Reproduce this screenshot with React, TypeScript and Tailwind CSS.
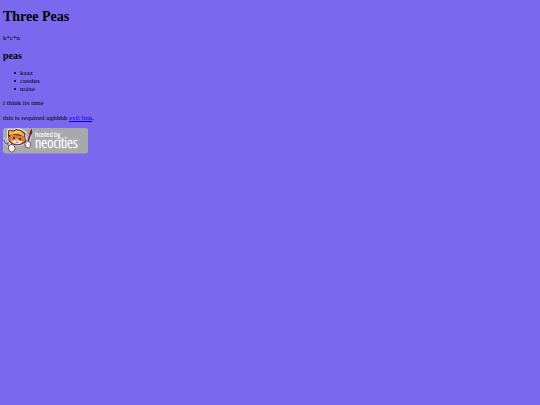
const peas = ["kaaz", "cassius", "noise"];

const NeocitiesBadge = () => {
  return (
    <svg viewBox="0 0 85 26" className="h-[26px] w-[85px]" role="img" aria-label="hosted by neocities">
      <rect x="0" y="0" width="85" height="25.4" rx="2.6" fill="#a9a9ab" />
      {/* wrench */}
      <g fill="none" strokeLinecap="round" strokeLinejoin="round">
        <path d="M.9 11.8l1.3 3.4 2.4.3 1.2-2-.9-3M4 16l4 4" stroke="#e9e7f2" strokeWidth="2.8" />
        <path d="M.9 11.8l1.3 3.4 2.4.3 1.2-2-.9-3M4 16l4 4" stroke="#66648c" strokeWidth="1.5" />
      </g>
      {/* brush */}
      <path d="M29 0l1 2.5-.8 5.6-3.5 8.6-2.4-.7 3-8.3.3-4.7z" fill="#d8d2da" />
      <path d="M28.7.6c1.3 2.4.9 5-.6 7.2l-1.9-.6c-.1-2.6.8-4.9 2.5-6.6z" fill="#752036" />
      <path d="M27 7.4l-2.4 7.4" stroke="#54293b" strokeWidth="1.5" />
      {/* cat */}
      <path d="M4 7.2l.2-5.6L6.7.3l3.1.9L13.5 0l4.7.8 3.2 2 2.2 1.5-.3 4.2 1.5 3.8-2.6 3.2-3.5 1.9-5.1.9-5.2-1.5-3.6-3.3-.6-2.9z" fill="#ece7f2" />
      <path d="M4.9 6.9l.3-4.5 1.7-1 3 1.2 3.6-1.5 4.3.8 2.8 1.9 2 1.4-.5 3.7 1.6 3.5-2.1 2.5-3.4 1.9-4.6.7-4.6-1.3-3.4-3-.2-3z" fill="#55342c" />
      <path d="M6.2 9.2l2.7-2.6 12.1 2 1.7 3.5-1.9 2-3.2 1.7-4 .6-4.2-1.2-3-2.8z" fill="#e57c36" />
      <path d="M5.9 6.6l.2-3.4 1.1-.6 2.7 1.1 3.7-1.5 3.8.8 2.5 1.8 1.5 1.4-.4 2.3-5.2-2.3-4.9-.3-3.6 1.5z" fill="#efb83c" />
      <path d="M10.4 4.6l3.3-1.3 3.5 1" fill="none" stroke="#ffe07a" strokeWidth="1" />
      <path d="M8.4 13l3.2-.4 2.3-1.6 2.2 1.8 3.6.7-2.1 1.9-3.5.7-3.8-1z" fill="#fff5ea" />
      <ellipse cx="10.9" cy="10" rx=".9" ry="1.3" fill="#302337" />
      <ellipse cx="17.2" cy="11" rx=".9" ry="1.3" fill="#302337" />
      <path d="M13.4 12.2l1.2.2M12.4 14l1.6.5 1.5-.2" fill="none" stroke="#6a3038" strokeWidth=".8" />
      {/* paws */}
      <path d="M5.6 18.2l2.4-1.8 3 .9 1.2 2.9-.9 2.7-2.9 1.3-2.5-1.8z" fill="#fff" stroke="#55475c" strokeWidth=".9" />
      <path d="M21.9 15l2.7-1.7 2.9 1.4.3 3.1-2.2 2.1-3-.8z" fill="#fff" stroke="#55475c" strokeWidth=".9" />
      <path d="M8.6 19.5l1.3.7-.2 1.4M24.8 16l1.2.7-.3 1.3" fill="none" stroke="#e9b18f" strokeWidth=".8" />
      <g
        fill="#fff"
        stroke="#fff"
        fontFamily="'Liberation Sans Narrow', 'Noto Sans Condensed', 'Open Sans Condensed Light', 'Roboto Condensed', Roboto, sans-serif"
      >
        <text x="32" y="9" fontSize="8" strokeWidth=".2">
          hosted by
        </text>
        <text x="32" y="20" fontSize="15" strokeWidth=".4">
          neocities
        </text>
      </g>
    </svg>
  );
};

const App = () => {
  return (
    <main className="min-h-screen bg-[#7b68ee] px-[3px] pt-[9px] font-['Liberation_Serif',serif] text-[7px] leading-[8px] text-black">
      <h1 className="mb-[9px] text-[14px] leading-[16px] font-bold">Three Peas</h1>
      <p className="mb-2">k*c*n</p>
      <h2 className="mb-[7px] text-[10px] leading-[12px] font-bold">peas</h2>
      <ul className="mb-[6px] pl-[11px]">
        {peas.map((pea) => (
          <li
            key={pea}
            className="flex items-center gap-1 before:size-[2px] before:rounded-full before:bg-black"
          >
            {pea}
          </li>
        ))}
      </ul>
      <p className="mb-[7px]">i think its time</p>
      <p className="mb-[6px]">
        this is required ughhhh{" "}
        <a href="#evil" className="text-[#0000ee] underline">
          evil link
        </a>
        .
      </p>
      <a href="#neocities" className="inline-block">
        <NeocitiesBadge />
      </a>
    </main>
  );
};

export default App;
